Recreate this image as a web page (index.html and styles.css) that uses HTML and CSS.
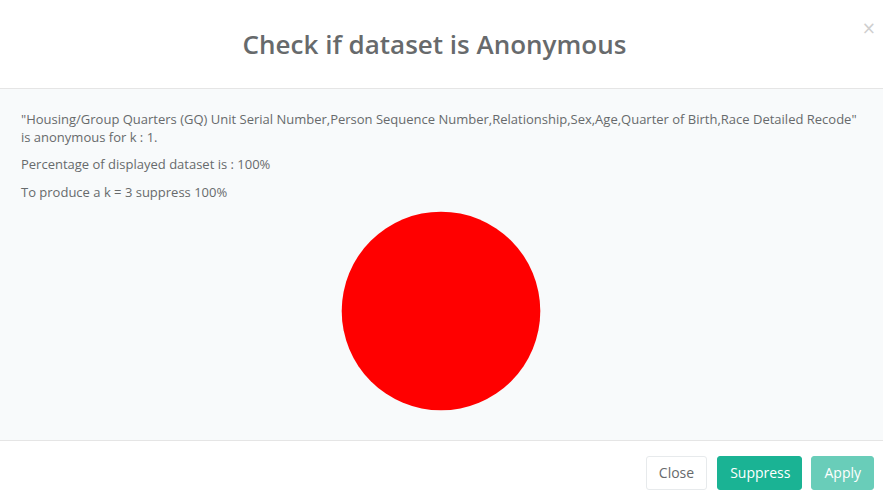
FILE: index.html
```html
<!DOCTYPE html>
<html>
<head>
<meta charset="utf-8">
<link rel="stylesheet" href="styles.css">
</head>
<body>
<div class="modal">
  <div class="modal-header">
    <button class="close" type="button">×</button>
    <h4 class="modal-title">Check if dataset is Anonymous</h4>
  </div>
  <div class="modal-body">
    <p>"Housing/Group Quarters (GQ) Unit Serial Number,Person Sequence Number,Relationship,Sex,Age,Quarter of Birth,Race Detailed Recode" is anonymous for k : 1.</p>
    <p>Percentage of displayed dataset is : 100%</p>
    <p>To produce a k = 3 suppress 100%</p>
    <div class="chart">
      <svg width="200" height="200" viewBox="0 0 200 200"><circle cx="100" cy="100" r="99.3" fill="#ff0000"/></svg>
    </div>
  </div>
  <div class="modal-footer">
    <button class="btn btn-white" type="button">Close</button>
    <button class="btn btn-primary" type="button">Suppress</button>
    <button class="btn btn-primary btn-disabled" type="button">Apply</button>
  </div>
</div>
</body>
</html>
```

FILE: styles.css
```css
html, body {
  margin: 0;
  padding: 0;
  background: #ffffff;
}
body {
  font-family: "Open Sans", "Liberation Sans", sans-serif;
  font-size: 13px;
  color: #676a6c;
}
.modal {
  background: #ffffff;
  width: 883px;
}
.modal-header {
  position: relative;
  padding: 30px 29px 30px 15px;
  text-align: center;
  border-bottom: 1px solid #e5e5e5;
}
.modal-title {
  margin: 0;
  font-size: 26px;
  font-weight: 600;
  line-height: 28px;
  color: #676a6c;
}
.close {
  position: absolute;
  top: 18px;
  right: 7px;
  border: 0;
  background: transparent;
  padding: 0;
  font-family: "DejaVu Sans", sans-serif;
  font-size: 17px;
  line-height: 20px;
  color: #cfcfcf;
  cursor: pointer;
}
.modal-body {
  background: #f8fafb;
  padding: 22px 20px 29px 21px;
}
.modal-body p {
  margin: 0 0 10px;
  line-height: 17.5px;
}
.chart {
  display: flex;
  justify-content: center;
  padding-right: 3px;
}
.chart svg {
  display: block;
}
.modal-footer {
  border-top: 1px solid #e5e5e5;
  padding: 15px 9px 15px;
  display: flex;
  justify-content: flex-end;
  gap: 9px;
}
.btn {
  font-family: "Open Sans", "Liberation Sans", sans-serif;
  font-size: 14px;
  height: 34px;
  padding: 0 12px;
  border-radius: 3px;
  border: 1px solid transparent;
  line-height: 32px;
}
.btn-white {
  background: #ffffff;
  border-color: #e7eaec;
  color: #676a6c;
  margin-right: 1px;
}
.btn-primary {
  background: #1ab394;
  border-color: #1ab394;
  color: #ffffff;
}
.btn-primary:not(.btn-disabled) {
  padding: 0 11px 0 12px;
}
.btn-disabled {
  opacity: 0.65;
}
```
